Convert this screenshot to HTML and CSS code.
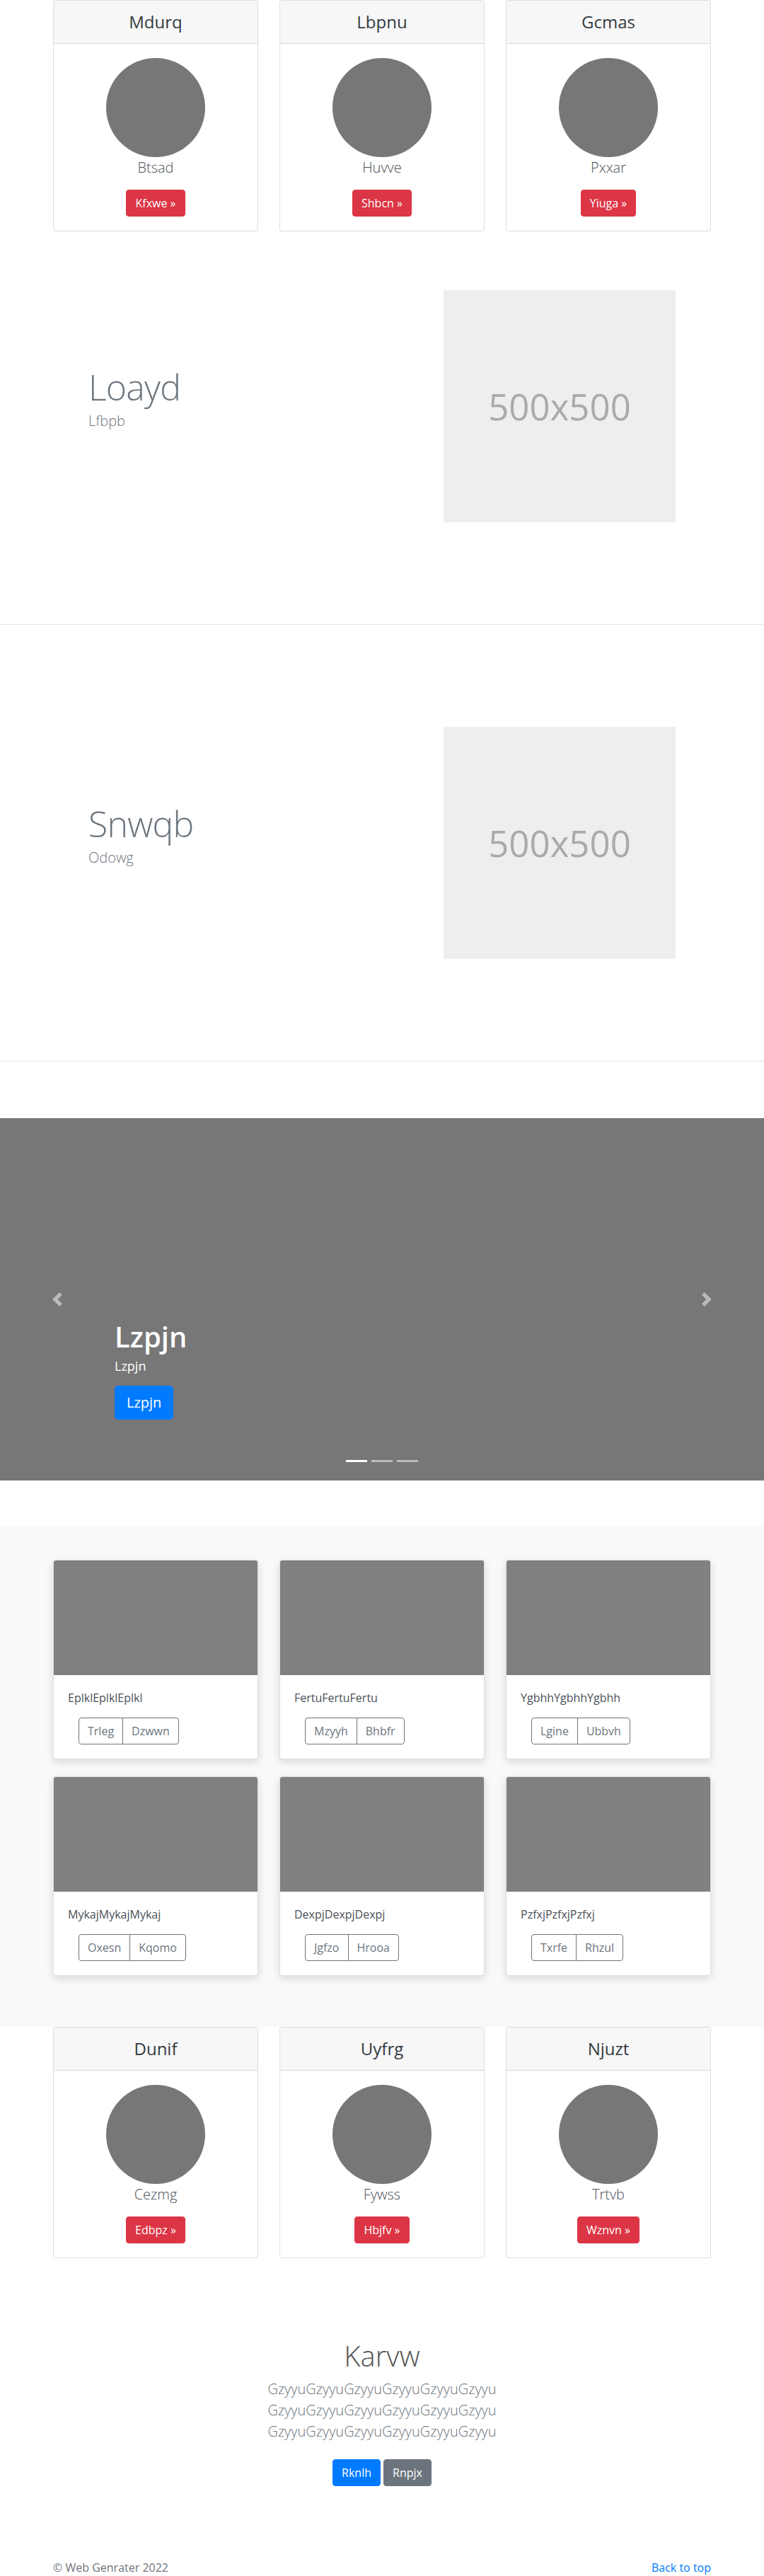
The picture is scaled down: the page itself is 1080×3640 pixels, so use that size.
FILE: index.html
```html
<!DOCTYPE html>
<html lang="en">
<head>
<meta charset="utf-8">
<title>Web Genrater</title>
<link rel="stylesheet" href="styles.css">
</head>
<body>
<main>
  <div class="container">
    <div class="deck deck-top">
      <div class="pcard">
        <div class="pcard-header"><h4>Mdurq</h4></div>
        <div class="pcard-body">
          <div class="avatar"></div>
          <p class="lead dark">Btsad</p>
          <a class="btn btn-danger" href="#">Kfxwe &raquo;</a>
        </div>
      </div>
      <div class="pcard">
        <div class="pcard-header"><h4>Lbpnu</h4></div>
        <div class="pcard-body">
          <div class="avatar"></div>
          <p class="lead dark">Huvve</p>
          <a class="btn btn-danger" href="#">Shbcn &raquo;</a>
        </div>
      </div>
      <div class="pcard">
        <div class="pcard-header"><h4>Gcmas</h4></div>
        <div class="pcard-body">
          <div class="avatar"></div>
          <p class="lead dark">Pxxar</p>
          <a class="btn btn-danger" href="#">Yiuga &raquo;</a>
        </div>
      </div>
    </div>
  </div>

  <div class="feature">
    <div class="feature-text">
      <h2 class="feature-heading">Loayd</h2>
      <p class="lead muted">Lfbpb</p>
    </div>
    <div class="feature-media">
      <div class="placeholder">500x500</div>
    </div>
  </div>

  <hr class="divider">

  <div class="feature">
    <div class="feature-text">
      <h2 class="feature-heading">Snwqb</h2>
      <p class="lead muted">Odowg</p>
    </div>
    <div class="feature-media">
      <div class="placeholder">500x500</div>
    </div>
  </div>

  <hr class="divider">

  <div class="carousel">
    <ol class="indicators">
      <li class="active"></li>
      <li></li>
      <li></li>
    </ol>
    <div class="caption">
      <h1>Lzpjn</h1>
      <p>Lzpjn</p>
      <p><a class="btn btn-lg btn-primary" href="#">Lzpjn</a></p>
    </div>
    <a class="control control-prev" href="#">
      <svg width="20" height="20" viewBox="0 0 8 8"><path fill="#fff" d="M5.25 0l-4 4 4 4 1.5-1.5L4.25 4l2.5-2.5L5.25 0z"/></svg>
    </a>
    <a class="control control-next" href="#">
      <svg width="20" height="20" viewBox="0 0 8 8"><path fill="#fff" d="M2.75 0l-1.5 1.5L3.75 4l-2.5 2.5L2.75 8l4-4-4-4z"/></svg>
    </a>
  </div>

  <div class="album">
    <div class="container">
      <div class="album-grid">
        <div class="acard">
          <div class="acard-img"></div>
          <div class="acard-body">
            <p>EplklEplklEplkl</p>
            <div class="btn-group"><a class="btn btn-outline" href="#">Trleg</a><a class="btn btn-outline" href="#">Dzwwn</a></div>
          </div>
        </div>
        <div class="acard">
          <div class="acard-img"></div>
          <div class="acard-body">
            <p>FertuFertuFertu</p>
            <div class="btn-group"><a class="btn btn-outline" href="#">Mzyyh</a><a class="btn btn-outline" href="#">Bhbfr</a></div>
          </div>
        </div>
        <div class="acard">
          <div class="acard-img"></div>
          <div class="acard-body">
            <p>YgbhhYgbhhYgbhh</p>
            <div class="btn-group"><a class="btn btn-outline" href="#">Lgine</a><a class="btn btn-outline" href="#">Ubbvh</a></div>
          </div>
        </div>
        <div class="acard">
          <div class="acard-img"></div>
          <div class="acard-body">
            <p>MykajMykajMykaj</p>
            <div class="btn-group"><a class="btn btn-outline" href="#">Oxesn</a><a class="btn btn-outline" href="#">Kqomo</a></div>
          </div>
        </div>
        <div class="acard">
          <div class="acard-img"></div>
          <div class="acard-body">
            <p>DexpjDexpjDexpj</p>
            <div class="btn-group"><a class="btn btn-outline" href="#">Jgfzo</a><a class="btn btn-outline" href="#">Hrooa</a></div>
          </div>
        </div>
        <div class="acard">
          <div class="acard-img"></div>
          <div class="acard-body">
            <p>PzfxjPzfxjPzfxj</p>
            <div class="btn-group"><a class="btn btn-outline" href="#">Txrfe</a><a class="btn btn-outline" href="#">Rhzul</a></div>
          </div>
        </div>
      </div>
    </div>
  </div>

  <div class="container">
    <div class="deck">
      <div class="pcard">
        <div class="pcard-header"><h4>Dunif</h4></div>
        <div class="pcard-body">
          <div class="avatar"></div>
          <p class="lead dark">Cezmg</p>
          <a class="btn btn-danger" href="#">Edbpz &raquo;</a>
        </div>
      </div>
      <div class="pcard">
        <div class="pcard-header"><h4>Uyfrg</h4></div>
        <div class="pcard-body">
          <div class="avatar"></div>
          <p class="lead dark">Fywss</p>
          <a class="btn btn-danger" href="#">Hbjfv &raquo;</a>
        </div>
      </div>
      <div class="pcard">
        <div class="pcard-header"><h4>Njuzt</h4></div>
        <div class="pcard-body">
          <div class="avatar"></div>
          <p class="lead dark">Trtvb</p>
          <a class="btn btn-danger" href="#">Wznvn &raquo;</a>
        </div>
      </div>
    </div>
  </div>

  <section class="hero">
    <h1 class="hero-heading">Karvw</h1>
    <p class="lead muted">GzyyuGzyyuGzyyuGzyyuGzyyuGzyyu<br>GzyyuGzyyuGzyyuGzyyuGzyyuGzyyu<br>GzyyuGzyyuGzyyuGzyyuGzyyuGzyyu</p>
    <div class="hero-actions">
      <a class="btn btn-primary" href="#">Rknlh</a>
      <a class="btn btn-secondary" href="#">Rnpjx</a>
    </div>
  </section>
</main>

<footer class="footer">
  <div class="container footer-row">
    <p>&copy; Web Genrater 2022</p>
    <p><a href="#">Back to top</a></p>
  </div>
</footer>
</body>
</html>
```
FILE: styles.css
```css
* { box-sizing: border-box; }

html, body {
  margin: 0;
  padding: 0;
}

body {
  font-family: "Open Sans", "Noto Sans", sans-serif;
  font-size: 16px;
  line-height: 1.5;
  color: #212529;
  background: #fff;
}

a { color: #007bff; text-decoration: none; }

.container {
  width: 930px;
  margin: 0 auto;
}

/* buttons */
.btn {
  display: inline-block;
  font-size: 16px;
  line-height: 24px;
  padding: 6px 12px;
  border: 1px solid transparent;
  border-radius: 4px;
  font-weight: 400;
  text-align: center;
  white-space: nowrap;
}
.btn-lg {
  font-size: 20px;
  line-height: 30px;
  padding: 8px 16px;
  border-radius: 5px;
}
.btn-danger { background: #dc3545; border-color: #dc3545; color: #fff; }
.btn-primary { background: #007bff; border-color: #007bff; color: #fff; }
.btn-secondary { background: #6c757d; border-color: #6c757d; color: #fff; }
.btn-outline { background: transparent; border-color: #6c757d; color: #6c757d; }

.lead {
  font-size: 20px;
  line-height: 30px;
  font-weight: 300;
}
.muted { color: #6c757d; }
.dark { color: #495057; }

/* pricing deck */
.deck {
  display: flex;
  gap: 30px;
}
.deck-top { margin-bottom: 19px; }

.pcard {
  flex: 1;
  border: 1px solid rgba(0, 0, 0, .125);
  border-radius: 4px;
  text-align: center;
  background: #fff;
  overflow: hidden;
}
.pcard-header {
  background: #f7f7f7;
  border-bottom: 1px solid rgba(0, 0, 0, .125);
  padding: 12px 20px;
}
.pcard-header h4 {
  margin: 0;
  font-size: 24px;
  line-height: 36px;
  font-weight: 400;
  color: #343a40;
}
.pcard-body { padding: 20px; }
.avatar {
  width: 140px;
  height: 140px;
  border-radius: 50%;
  background: #777;
  margin: 0 auto;
}
.pcard-body .lead { margin: 0 0 16px; }

/* features */
.feature {
  width: 830px;
  margin: 0 auto;
  height: 456px;
  display: flex;
  align-items: center;
}
.feature-text { flex: 1; }
.feature-media {
  flex: 1;
  display: flex;
  justify-content: flex-end;
}
.feature-heading {
  margin: 0 0 8px;
  font-size: 50px;
  line-height: 1;
  font-weight: 300;
  letter-spacing: -0.8px;
  color: #6c757d;
}
.feature-text .lead { margin: 0 0 16px; }
.placeholder {
  width: 328px;
  height: 328px;
  background: #eee;
  color: #aaa;
  font-size: 51px;
  display: flex;
  align-items: center;
  justify-content: center;
}

.divider {
  margin: 80px 0;
  border: 0;
  border-top: 1px solid #e5e5e5;
  height: 0;
}

/* carousel */
.carousel {
  position: relative;
  height: 512px;
  background: #777;
  margin-bottom: 64px;
}
.caption {
  position: absolute;
  left: 15%;
  right: 15%;
  bottom: 66px;
  padding: 20px 0;
  color: #fff;
  text-align: left;
}
.caption h1 {
  margin: 0 0 5px;
  font-size: 40px;
  line-height: 48px;
  font-weight: 600;
}
.caption p {
  margin: 0 0 16px;
  font-size: 18px;
  line-height: 24px;
}
.caption p:last-child { margin-bottom: 0; }
.control {
  position: absolute;
  top: 0;
  bottom: 0;
  width: 15%;
  display: flex;
  align-items: center;
  justify-content: center;
  opacity: .5;
}
.control-prev { left: 0; }
.control-next { right: 0; }
.control svg { display: block; }

.indicators {
  position: absolute;
  left: 15%;
  right: 15%;
  bottom: 0;
  margin: 0 0 16px;
  padding: 0;
  list-style: none;
  display: flex;
  justify-content: center;
}
.indicators li {
  width: 30px;
  height: 23px;
  margin: 0 3px;
  border-top: 10px solid transparent;
  border-bottom: 10px solid transparent;
  background: #fff;
  background-clip: padding-box;
  opacity: .5;
}
.indicators li.active { opacity: 1; }

/* album */
.album {
  background: #f8f9fa;
  padding: 48px 0 72px;
}
.album-grid {
  display: grid;
  grid-template-columns: repeat(3, 1fr);
  column-gap: 30px;
  row-gap: 24px;
}
.acard {
  background: #fff;
  border: 1px solid rgba(0, 0, 0, .125);
  border-radius: 4px;
  overflow: hidden;
  box-shadow: 0 4px 12px rgba(0, 0, 0, .13);
}
.acard-img {
  height: 162px;
  background: #808080;
}
.acard-body { padding: 20px; }
.acard-body p {
  margin: 0 0 16px;
  color: #495057;
}
.btn-group {
  display: inline-flex;
  margin-left: 15px;
}
.btn-group .btn:first-child {
  border-top-right-radius: 0;
  border-bottom-right-radius: 0;
}
.btn-group .btn + .btn {
  margin-left: -1px;
  border-top-left-radius: 0;
  border-bottom-left-radius: 0;
}

/* hero */
.hero {
  padding: 114px 0 32px;
  text-align: center;
}
.hero-heading {
  margin: 0 0 8px;
  font-size: 40px;
  line-height: 48px;
  font-weight: 300;
  color: #555;
}
.hero .lead { margin: 0; }
.hero-actions {
  display: flex;
  justify-content: center;
  gap: 4px;
  margin: 24px 0;
}

/* footer */
.footer {
  padding-top: 47px;
  color: #6c757d;
}
.footer-row {
  display: flex;
  justify-content: space-between;
}
.footer p { margin: 0; }
```
